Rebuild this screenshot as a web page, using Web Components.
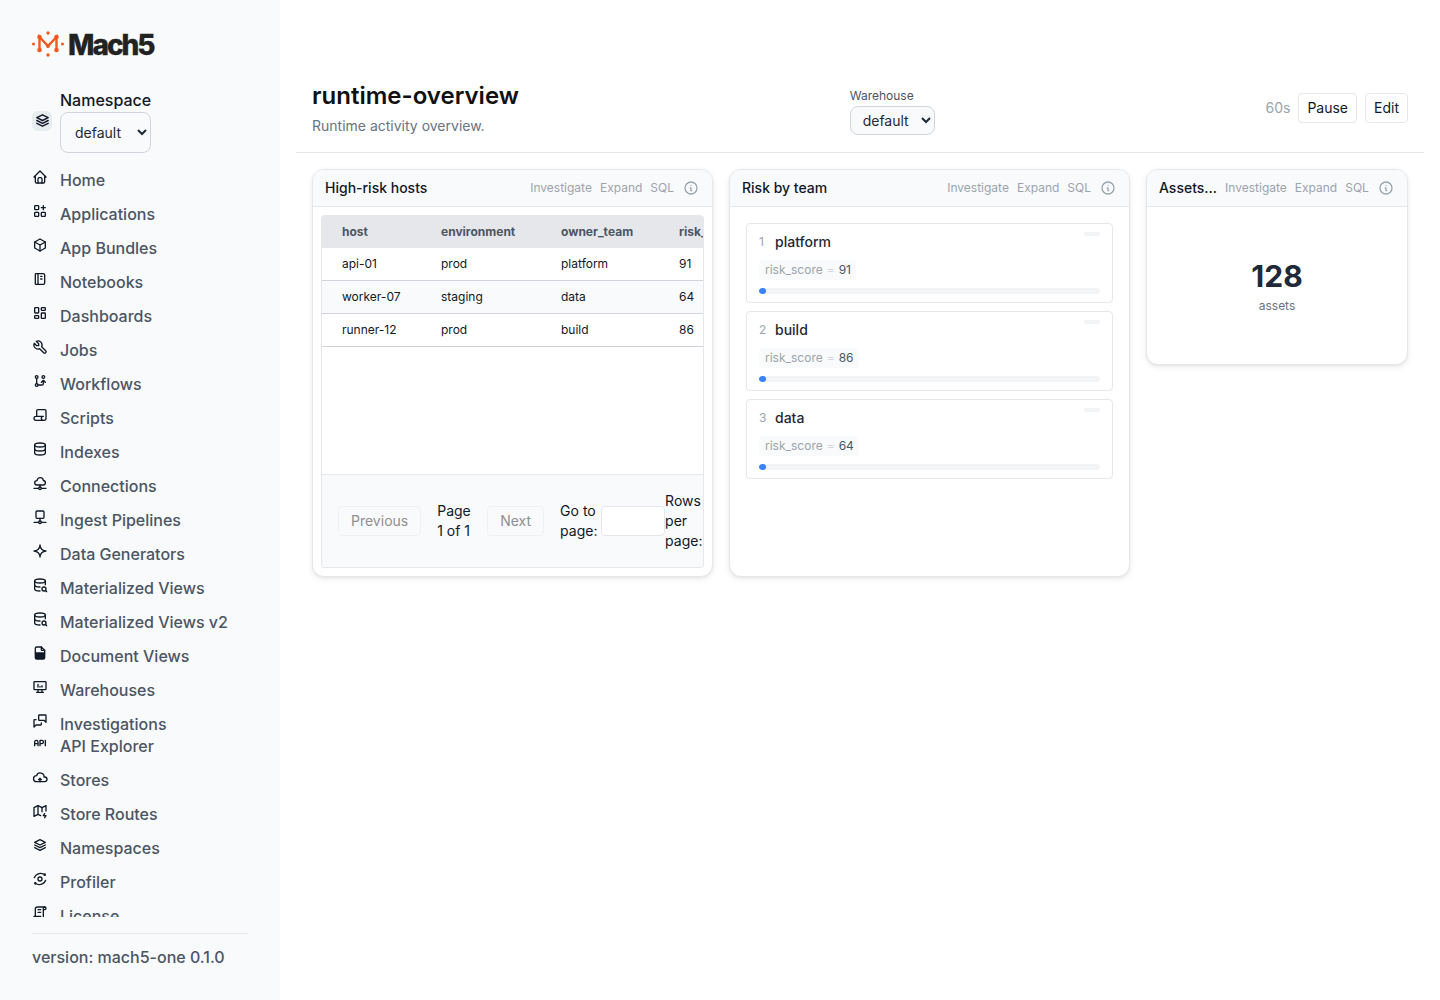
<!DOCTYPE html>
<html lang="en"><head><meta charset="utf-8"><title>runtime-overview</title>
<style>
html,body{margin:0;padding:0;height:100%;background:#fff;font-family:Inter,"Liberation Sans",sans-serif;color:#111827}
</style></head>
<body>
<m5-app>
  <m5-sidebar slot="side">
    <m5-nav icon="home">Home</m5-nav>
    <m5-nav icon="apps">Applications</m5-nav>
    <m5-nav icon="package">App Bundles</m5-nav>
    <m5-nav icon="notebook">Notebooks</m5-nav>
    <m5-nav icon="dashboard">Dashboards</m5-nav>
    <m5-nav icon="tool">Jobs</m5-nav>
    <m5-nav icon="branch">Workflows</m5-nav>
    <m5-nav icon="script">Scripts</m5-nav>
    <m5-nav icon="database">Indexes</m5-nav>
    <m5-nav icon="cloudnet">Connections</m5-nav>
    <m5-nav icon="network">Ingest Pipelines</m5-nav>
    <m5-nav icon="sparkle">Data Generators</m5-nav>
    <m5-nav icon="dbsearch">Materialized Views</m5-nav>
    <m5-nav icon="dbsearch">Materialized Views v2</m5-nav>
    <m5-nav icon="filehalf">Document Views</m5-nav>
    <m5-nav icon="desktop">Warehouses</m5-nav>
    <m5-nav icon="messages" tight>Investigations</m5-nav>
    <m5-nav icon="api">API Explorer</m5-nav>
    <m5-nav icon="cloudup">Stores</m5-nav>
    <m5-nav icon="mapbolt">Store Routes</m5-nav>
    <m5-nav icon="stack">Namespaces</m5-nav>
    <m5-nav icon="profiler">Profiler</m5-nav>
    <m5-nav icon="license">License</m5-nav>
  </m5-sidebar>
  <m5-header></m5-header>
  <m5-grid>
    <m5-card title="High-risk hosts"><m5-table></m5-table></m5-card>
    <m5-card title="Risk by team">
      <m5-risk-list>
        <m5-risk rank="1" name="platform" value="91"></m5-risk>
        <m5-risk rank="2" name="build" value="86"></m5-risk>
        <m5-risk rank="3" name="data" value="64"></m5-risk>
      </m5-risk-list>
    </m5-card>
    <m5-card title="Assets..." compact><m5-stat value="128" label="assets"></m5-stat></m5-card>
  </m5-grid>
</m5-app>
<script>
const ICONS={
home:'<path d="M5 12H3l9-9 9 9h-2"/><path d="M5 12v7a2 2 0 0 0 2 2h10a2 2 0 0 0 2-2v-7"/><path d="M9 21v-6a2 2 0 0 1 2-2h2a2 2 0 0 1 2 2v6"/>',
apps:'<rect x="4" y="4" width="6" height="6" rx="1"/><rect x="4" y="14" width="6" height="6" rx="1"/><rect x="14" y="14" width="6" height="6" rx="1"/><path d="M14 7h6M17 4v6"/>',
package:'<path d="M12 3l8 4.500v9L12 21l-8-4.500v-9L12 3"/><path d="M12 12l8-4.500M12 12v9M12 12L4 7.500"/>',
notebook:'<path d="M6 4h11a2 2 0 0 1 2 2v12a2 2 0 0 1-2 2H6a1 1 0 0 1-1-1V5a1 1 0 0 1 1-1"/><path d="M9 4v16M13 8h2M13 12h2"/>',
dashboard:'<rect x="4" y="4" width="6" height="8" rx="1"/><rect x="4" y="16" width="6" height="4" rx="1"/><rect x="14" y="12" width="6" height="8" rx="1"/><rect x="14" y="4" width="6" height="4" rx="1"/>',
tool:'<path d="M7 10h3V7L6.500 3.500a6 6 0 0 1 8 8l6 6a2 2 0 0 1-3 3l-6-6a6 6 0 0 1-8-8L7 10"/>',
branch:'<circle cx="7" cy="18" r="2"/><circle cx="7" cy="6" r="2"/><circle cx="17" cy="6" r="2"/><path d="M7 8v8M9 18h6a2 2 0 0 0 2-2v-5M14 14l3-3 3 3"/>',
script:'<path d="M17 20H6a3 3 0 0 1 0-6h11a3 3 0 0 0 0 6h1a3 3 0 0 0 3-3V6a2 2 0 0 0-2-2H9a2 2 0 0 0-2 2v8"/>',
database:'<ellipse cx="12" cy="6" rx="8" ry="3"/><path d="M4 6v6a8 3 0 0 0 16 0V6"/><path d="M4 12v6a8 3 0 0 0 16 0v-6"/>',
cloudnet:'<path d="M3 20h7M14 20h7"/><circle cx="12" cy="20" r="2"/><path d="M12 15v3"/><path d="M9 15H7.500C5.600 15 4 13.600 4 11.800S5.600 8.500 7.500 8.500C8 5.800 10 4 12.300 4c2.500 0 4.400 1.700 4.700 4.300 1.800.1 3 1.600 3 3.300 0 1.900-1.400 3.400-3.300 3.400H15z"/>',
network:'<rect x="6" y="3" width="12" height="11" rx="1.500"/><path d="M12 14v4M3 20h7M14 20h7"/><circle cx="12" cy="20" r="2"/>',
sparkle:'<path d="M12 3a9 9 0 0 0 9 9 9 9 0 0 0-9 9 9 9 0 0 0-9-9 9 9 0 0 0 9-9"/>',
dbsearch:'<path d="M4 6c0 1.657 3.582 3 8 3s8-1.343 8-3-3.582-3-8-3-8 1.343-8 3"/><path d="M4 6v6c0 1.657 3.582 3 8 3M20 11.500V6"/><path d="M4 12v6c0 1.657 3.582 3 8 3"/><circle cx="18" cy="18" r="3"/><path d="M20.200 20.200L22 22"/>',
filehalf:'<path d="M14 3v4a1 1 0 0 0 1 1h4"/><path d="M5 12V5a2 2 0 0 1 2-2h7l5 5v4"/><path fill="currentColor" d="M5 12h14v7a2 2 0 0 1-2 2H7a2 2 0 0 1-2-2z"/>',
desktop:'<rect x="3" y="4" width="18" height="12" rx="1"/><path d="M7 20h10M9 16v4M15 16v4M9 12V8M12 12v-1M15 12v-2"/>',
messages:'<path d="M21 14l-3-3h-7a1 1 0 0 1-1-1V4a1 1 0 0 1 1-1h9a1 1 0 0 1 1 1v10"/><path d="M14 15v2a1 1 0 0 1-1 1H6l-3 3V11a1 1 0 0 1 1-1h2"/>',
api:'<path d="M4 13h5M12 16V8h3a2 2 0 0 1 2 2v1a2 2 0 0 1-2 2h-3M20 8v8M9 16v-5.500a2.500 2.500 0 0 0-5 0V16"/>',
cloudup:'<path d="M7 19a4.600 4.400 0 0 1 0-9 5 4.500 0 0 1 11 2h1a3.500 3.500 0 0 1 0 7z"/><path d="M12 19v-5M10 16l2-2 2 2"/>',
mapbolt:'<path d="M13 19l-4-2-6 3V7l6-3 6 3 6-3v8"/><path d="M9 4v13M15 7v6M19 16l-2 3h4l-2 3"/>',
stack:'<path d="M12 4L4 8l8 4 8-4-8-4"/><path d="M4 12l8 4 8-4M4 16l8 4 8-4"/>',
profiler:'<circle cx="12" cy="12" r="3"/><path d="M3.500 10C5 5.500 11 2 17 4.500"/><path d="M20.500 14C19 18.500 13 22 7 19.500"/><circle cx="19" cy="5.500" r="1"/><circle cx="5" cy="18.500" r="1"/>',
license:'<path d="M15 21H6a3 3 0 0 1-3-3v-1h10v2a2 2 0 0 0 4 0V5a2 2 0 1 1 2 2h-2"/><path d="M19 3H8a3 3 0 0 0-3 3v11M9 7h4M9 11h4"/>',
info:'<circle cx="12" cy="12" r="9"/><path d="M12 8h.01M11 12h1v4h1"/>'
};
function def(name,html){
  customElements.define(name,class extends HTMLElement{
    connectedCallback(){
      if(this.shadowRoot)return;
      const r=this.attachShadow({mode:'open'});
      r.innerHTML=typeof html==='function'?html(this):html;
    }
  });
}
def('m5-icon',el=>`<style>:host{display:inline-flex;width:var(--s,16px);height:var(--s,16px);flex:none}svg{width:100%;height:100%;display:block}</style>
<svg viewBox="0 0 24 24" fill="none" stroke="currentColor" stroke-width="2" stroke-linecap="round" stroke-linejoin="round">${ICONS[el.getAttribute('name')]||''}</svg>`);
def('m5-app',`<style>:host{display:flex;height:100vh;overflow:hidden}main{flex:1;min-width:0;display:flex;flex-direction:column}</style>
<slot name="side"></slot><main><slot></slot></main>`);
def('m5-sidebar',`<style>
:host{display:flex;flex-direction:column;width:280px;flex:none;box-sizing:border-box;height:100vh;background:#f9fafb;padding:30px 32px 31px}
.logo{display:flex;align-items:center;gap:4px;height:27px;flex:none}
.logo svg{width:32px;height:26px;flex:none;display:block}
.word{font:800 28px/27px Inter,"Liberation Sans",sans-serif;letter-spacing:-2px;color:#222;-webkit-text-stroke:.3px #222;margin-top:3px}
.ns{display:flex;align-items:center;gap:8px;margin-top:31px;flex:none}
.nsi{width:20px;height:20px;border-radius:6px;background:#e7ecef;display:flex;align-items:center;justify-content:center;color:#111827;--s:17px}
label{display:block;font:500 16px/24px Inter,"Liberation Sans",sans-serif;color:#111827}
select{display:block;width:91px;height:41px;box-sizing:border-box;border:1px solid #d1d5db;border-radius:8px;background:#f9fafb;font:400 14px Inter,"Liberation Sans",sans-serif;color:#1f2937;padding:0 10px}
nav{flex:1;min-height:0;overflow:hidden;margin-top:15px}
.ver{flex:none;margin-top:16px;border-top:1px solid #e5e7eb;padding-top:11px;font:500 16px/24px Inter,"Liberation Sans",sans-serif;color:#4b5563}
</style>
<div class="logo"><svg viewBox="0 0 32 26"><g fill="#f4581f">
<circle cx="1.500" cy="13" r="1.500"/><circle cx="30.500" cy="13" r="1.500"/><circle cx="16" cy="2" r="1.700"/><circle cx="16" cy="24" r="1.700"/>
<circle cx="7.500" cy="6" r="2.300"/><circle cx="24.500" cy="6" r="2.300"/><circle cx="7.500" cy="19" r="2.300"/><circle cx="24.500" cy="19" r="2.300"/><circle cx="16" cy="15" r="2"/></g>
<path d="M7.500 19V6l8.500 9 8.500-9v13" fill="none" stroke="#f4581f" stroke-width="2.400"/></svg><span class="word">Mach5</span></div>
<div class="ns"><div class="nsi"><m5-icon name="stack"></m5-icon></div><div><label for="n">Namespace</label><select id="n"><option>default</option></select></div></div>
<nav><slot></slot></nav>
<div class="ver">version: mach5-one 0.1.0</div>`);
def('m5-nav',el=>{const t=el.hasAttribute('tight');return `<style>
:host{display:flex;gap:12px;align-items:flex-start;height:${t?'22px':'24px'};padding-bottom:${t?'0':'10px'};font:500 16px/24px Inter,"Liberation Sans",sans-serif;color:#4b5563}
m5-icon{color:#111827;margin-top:1px}
</style><m5-icon name="${el.getAttribute('icon')}"></m5-icon><span><slot></slot></span>`});
def('m5-header',`<style>
:host{display:flex;justify-content:space-between;align-items:center;margin:0 16px;padding:80px 16px 16px;border-bottom:1px solid #e5e7eb;flex:none}
h1{margin:0;font:600 24px/32px Inter,"Liberation Sans",sans-serif;color:#111;}
p{margin:4px 0 0;font:400 14px/20px Inter,"Liberation Sans",sans-serif;color:#6b7280}
.wh{padding-top:7px}
label{display:block;font:400 12px/16px Inter,"Liberation Sans",sans-serif;color:#4b5563;margin-bottom:2px}
select{display:block;width:85px;height:29px;box-sizing:border-box;border:1px solid #d1d5db;border-radius:8px;background:#f9fafb;font:400 14px Inter,"Liberation Sans",sans-serif;color:#1f2937;padding:0 8px}
.r{display:flex;align-items:center;gap:8px;font:400 14px/20px Inter,"Liberation Sans",sans-serif;color:#9ca3af}
button{height:30px;box-sizing:border-box;padding:0 8px 1px;background:#fff;border:1px solid #e5e7eb;border-radius:4px;font:400 14px Inter,"Liberation Sans",sans-serif;color:#111827}
</style>
<div><h1>runtime-overview</h1><p>Runtime activity overview.</p></div>
<div class="wh"><label for="w">Warehouse</label><select id="w"><option>default</option></select></div>
<div class="r"><span>60s</span><button>Pause</button><button>Edit</button></div>`);
def('m5-grid',`<style>:host{display:grid;grid-template-columns:401px 401px 262px;gap:16px;padding:16px 32px;align-items:start}</style><slot></slot>`);
def('m5-card',el=>{const c=el.hasAttribute('compact');return `<style>
:host{display:block;box-sizing:border-box;background:#fff;border:1px solid #e5e7eb;border-radius:12px;box-shadow:0 1px 2px rgba(0,0,0,.05),0 2px 6px rgba(0,0,0,.08);overflow:hidden;height:${c?'196px':'408px'}}
header{display:flex;align-items:center;justify-content:space-between;gap:8px;height:37px;box-sizing:border-box;background:#f9fafb;border-bottom:1px solid #e5e7eb;padding:0 ${c?15:14}px 0 12px}
h2{margin:0;font:500 14px/20px Inter,"Liberation Sans",sans-serif;color:#111827;white-space:nowrap}
.a{display:flex;align-items:center;gap:8px;font:400 12px/16px Inter,"Liberation Sans",sans-serif;color:#9ca3af}
m5-icon{--s:16px;margin-left:1px;margin-right:-1px;color:#9ca3af}
</style><header><h2>${el.getAttribute('title')}</h2><div class="a"><span>Investigate</span><span>Expand</span><span>SQL</span><m5-icon name="info"></m5-icon></div></header><slot></slot>`});
const rows=[['api-01','prod','platform','91'],['worker-07','staging','data','64'],['runner-12','prod','build','86']];
def('m5-table',`<style>
:host{display:flex;flex-direction:column;margin:8px;height:353px;box-sizing:border-box;border-radius:4px;overflow:hidden;font:400 12px/16px Inter,"Liberation Sans",sans-serif;color:#111827;border:solid #e5e7eb;border-width:0 1px 1px}
.r{display:grid;grid-template-columns:99px 120px 118px 60px;padding-left:20px;height:33px;box-sizing:border-box;align-items:center;border-bottom:1px solid #d1d5db;white-space:nowrap}
.h{background:#e5e7eb;font-weight:700;color:#4b5563;border:0;margin:0 -1px;padding-left:21px}
.r:nth-of-type(3){background:#f9fafb}
.f{flex:1}
.p{flex:none;height:93px;box-sizing:border-box;background:#f9fafb;border-top:1px solid #e5e7eb;display:flex;align-items:center;gap:16px;padding:0 16px;font-size:14px;line-height:20px;overflow:hidden}
.p>*{flex:none}
button{height:30px;box-sizing:border-box;padding:0 12px 1px;border:1px solid #f0f1f3;background:#f9fafb;border-radius:4px;font:400 14px Inter,"Liberation Sans",sans-serif;color:#8f8f8f}
.g{display:flex;align-items:center;gap:4px}
.g span{width:37px}
input{width:64px;height:30px;box-sizing:border-box;border:1px solid #e5e7eb;border-radius:4px;background:#fff;padding:0}
.rp{width:37px;margin-left:-16px}
.pg{width:34px}
</style>
<div class="r h"><span>host</span><span>environment</span><span>owner_team</span><span>risk_score</span></div>
${rows.map(r=>`<div class="r">${r.map(c=>`<span>${c}</span>`).join('')}</div>`).join('')}
<div class="f"></div>
<div class="p"><button disabled>Previous</button><span class="pg">Page 1 of 1</span><button disabled>Next</button><div class="g"><span>Go to page:</span><input></div><span class="rp">Rows per page:</span></div>`);
def('m5-risk-list',`<style>:host{display:flex;flex-direction:column;gap:8px;padding:16px}</style><slot></slot>`);
def('m5-risk',el=>`<style>
:host{display:block;position:relative;height:80px;box-sizing:border-box;border:1px solid #e5e7eb;border-radius:4px;padding:8px 12px 0}
.t{display:flex;align-items:center;gap:8px;height:20px;font:500 14px/20px Inter,"Liberation Sans",sans-serif;color:#1f2937}
.n{font-size:12px;font-weight:400;color:#9ca3af;width:8px}
.c{display:inline-flex;gap:4px;align-items:center;height:20px;margin-top:8px;padding:0 5px 0 6px;background:#f9fafb;border-radius:4px;font:400 12px/16px Inter,"Liberation Sans",sans-serif;color:#9ca3af}
.c b{font-weight:400;color:#4b5563}.c i{font-style:normal;color:#d1d5db}
.bar{height:6px;background:#f3f4f6;border-radius:3px;margin-top:8px;overflow:hidden}
.bar div{width:7px;height:6px;background:#3b82f6;border-radius:3px}
.tag{position:absolute;top:8px;right:12px;width:16px;height:4px;background:#f3f4f6;border-radius:2px}
</style><span class="tag"></span><div class="t"><span class="n">${el.getAttribute('rank')}</span><span>${el.getAttribute('name')}</span></div>
<div class="c"><span>risk_score</span><i>=</i><b>${el.getAttribute('value')}</b></div><div class="bar"><div></div></div>`);
def('m5-stat',el=>`<style>
:host{display:flex;flex-direction:column;align-items:center;padding-top:51px}
.v{font:700 30px/36px Inter,"Liberation Sans",sans-serif;color:#1f2937}
.l{font:400 12px/16px Inter,"Liberation Sans",sans-serif;color:#6b7280;margin-top:4px}
</style><div class="v">${el.getAttribute('value')}</div><div class="l">${el.getAttribute('label')}</div>`);
</script>
</body></html>
